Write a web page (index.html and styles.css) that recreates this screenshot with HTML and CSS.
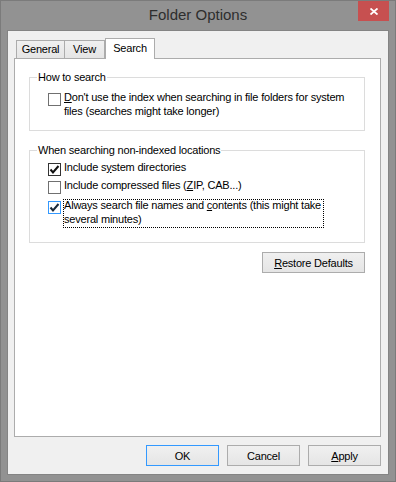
FILE: index.html
```html
<!DOCTYPE html>
<html lang="en">
<head>
    <meta charset="UTF-8">
    <title>Folder Options</title>
    <link rel="stylesheet" href="styles.css">
</head>
<body>
    <div class="window">
        <div class="titlebar">
            Folder Options
            <button class="close" title="Close">
                <svg width="8" height="7" viewBox="0 0 8 7">
                    <path d="M0.5 0.5 L7.5 6.5 M7.5 0.5 L0.5 6.5" stroke="#fff" stroke-width="1.8" fill="none"/>
                </svg>
            </button>
        </div>

        <div class="client">
            <div class="tabs">
                <div class="tab tab-general">General</div>
                <div class="tab tab-view">View</div>
                <div class="tab tab-search active">Search</div>
            </div>

            <div class="panel">
                <div class="group group-how">
                    <div class="group-title">How to search</div>
                    <div class="options options-how">
                        <label class="check">
                            <span class="box"></span>
                            <span class="text"><u>D</u>on't use the index when searching in file folders for system<br>files (searches might take longer)</span>
                        </label>
                    </div>
                </div>

                <div class="group group-where">
                    <div class="group-title">When searching non-indexed locations</div>
                    <div class="options options-where">
                        <label class="check">
                            <span class="box checked">
                                <svg width="11" height="11" viewBox="0 0 11 11"><path d="M1.5 5.5 L4 8.5 L9.5 2" stroke="#111" stroke-width="2" fill="none"/></svg>
                            </span>
                            <span class="text">Include s<u>y</u>stem directories</span>
                        </label>
                        <label class="check check-second">
                            <span class="box"></span>
                            <span class="text">Include compressed files (<u>Z</u>IP, CAB...)</span>
                        </label>
                        <label class="check check-third">
                            <span class="box checked hot">
                                <svg width="11" height="11" viewBox="0 0 11 11"><path d="M1.5 5.5 L4 8.5 L9.5 2" stroke="#1c2a3a" stroke-width="2" fill="none"/></svg>
                            </span>
                            <span class="text focus">Always search file names and <u>c</u>ontents (this might take<br>several minutes)</span>
                        </label>
                    </div>
                </div>

                <div class="panel-actions">
                    <button class="btn btn-restore"><u>R</u>estore Defaults</button>
                </div>
            </div>

            <div class="dialog-buttons">
                <button class="btn btn-default">OK</button>
                <button class="btn">Cancel</button>
                <button class="btn"><u>A</u>pply</button>
            </div>
        </div>
    </div>
</body>
</html>
```

FILE: styles.css
```css
body {
    margin: 0;
    font-family: "Liberation Sans", Arial, sans-serif;
    font-size: 11px;
    letter-spacing: -0.2px;
    color: #000;
}

.window {
    width: 396px;
    height: 482px;
    box-sizing: border-box;
    border: 1px solid #7b7b7b;
    background-color: #929292;
    padding: 0 6px 6px;
    display: flex;
    flex-direction: column;
}

.titlebar {
    height: 29px;
    position: relative;
    text-align: center;
    font-size: 15px;
    letter-spacing: 0;
    line-height: 28px;
    color: #2e2e2e;
}

.close {
    position: absolute;
    top: 0;
    right: 0;
    width: 31px;
    height: 20px;
    padding: 0;
    border: none;
    background-color: #c75050;
    display: flex;
    align-items: center;
    justify-content: center;
}

.close svg {
    display: block;
}

.client {
    flex: 1;
    background-color: #f0f0f0;
    border: 1px solid #848484;
    padding: 7px 7px 8px 6px;
    display: flex;
    flex-direction: column;
}

/* tabs */
.tabs {
    display: flex;
    align-items: flex-end;
    height: 20px;
    padding-left: 2px;
    position: relative;
    z-index: 1;
}

.tab {
    box-sizing: border-box;
    height: 18px;
    border: 1px solid #acacac;
    border-bottom: none;
    background: linear-gradient(#f0f0f0, #e5e5e5);
    text-align: center;
    line-height: 17px;
}

.tab-general {
    width: 49px;
}

.tab-view {
    width: 41px;
    margin-left: -1px;
}

.tab.active {
    width: 50px;
    height: 21px;
    margin-bottom: -1px;
    background: #fff;
    line-height: 19px;
}

.panel {
    flex: 1;
    background-color: #fff;
    border: 1px solid #acacac;
    padding: 0 15px 0 14px;
}

/* group boxes */
.group {
    border: 1px solid #dcdcdc;
}

.group-how {
    margin-top: 18px;
}

.group-where {
    margin-top: 19px;
}

.group-title {
    display: table;
    margin: -8px 0 0 7px;
    padding: 0 1px;
    background-color: #fff;
    line-height: 15px;
}

.options {
    padding-left: 18px;
}

.options-how {
    padding-top: 5px;
    padding-bottom: 12px;
}

.options-where {
    padding-top: 2px;
    padding-bottom: 16px;
}

.check {
    display: flex;
    align-items: flex-start;
    line-height: 14px;
}

.check-second {
    margin-top: 2px;
}

.check-third {
    margin-top: 4px;
}

.box {
    width: 13px;
    height: 13px;
    box-sizing: border-box;
    border: 1px solid #707070;
    background-color: #fff;
    margin: 3px 3px 0 0;
    flex: none;
}

.box svg {
    display: block;
}

.box.checked {
    border-color: #333;
}

.box.hot {
    border-color: #3399ff;
}

.focus {
    position: relative;
}

.focus::after {
    content: "";
    position: absolute;
    left: -1px;
    right: -3px;
    top: 1px;
    bottom: -2px;
    border: 1px dotted #000;
}

/* buttons */
.btn {
    box-sizing: border-box;
    height: 21px;
    padding: 0;
    border: 1px solid #acacac;
    background: linear-gradient(#f0f0f0, #e5e5e5);
    font-family: inherit;
    font-size: 11px;
    letter-spacing: -0.2px;
    color: #000;
}

.panel-actions {
    display: flex;
    justify-content: flex-end;
    margin-top: 9px;
}

.btn-restore {
    width: 103px;
}

.dialog-buttons {
    display: flex;
    justify-content: flex-end;
    gap: 8px;
    margin-top: 8px;
}

.dialog-buttons .btn {
    width: 73px;
}

.btn-default {
    border-color: #3399ff;
}
```
